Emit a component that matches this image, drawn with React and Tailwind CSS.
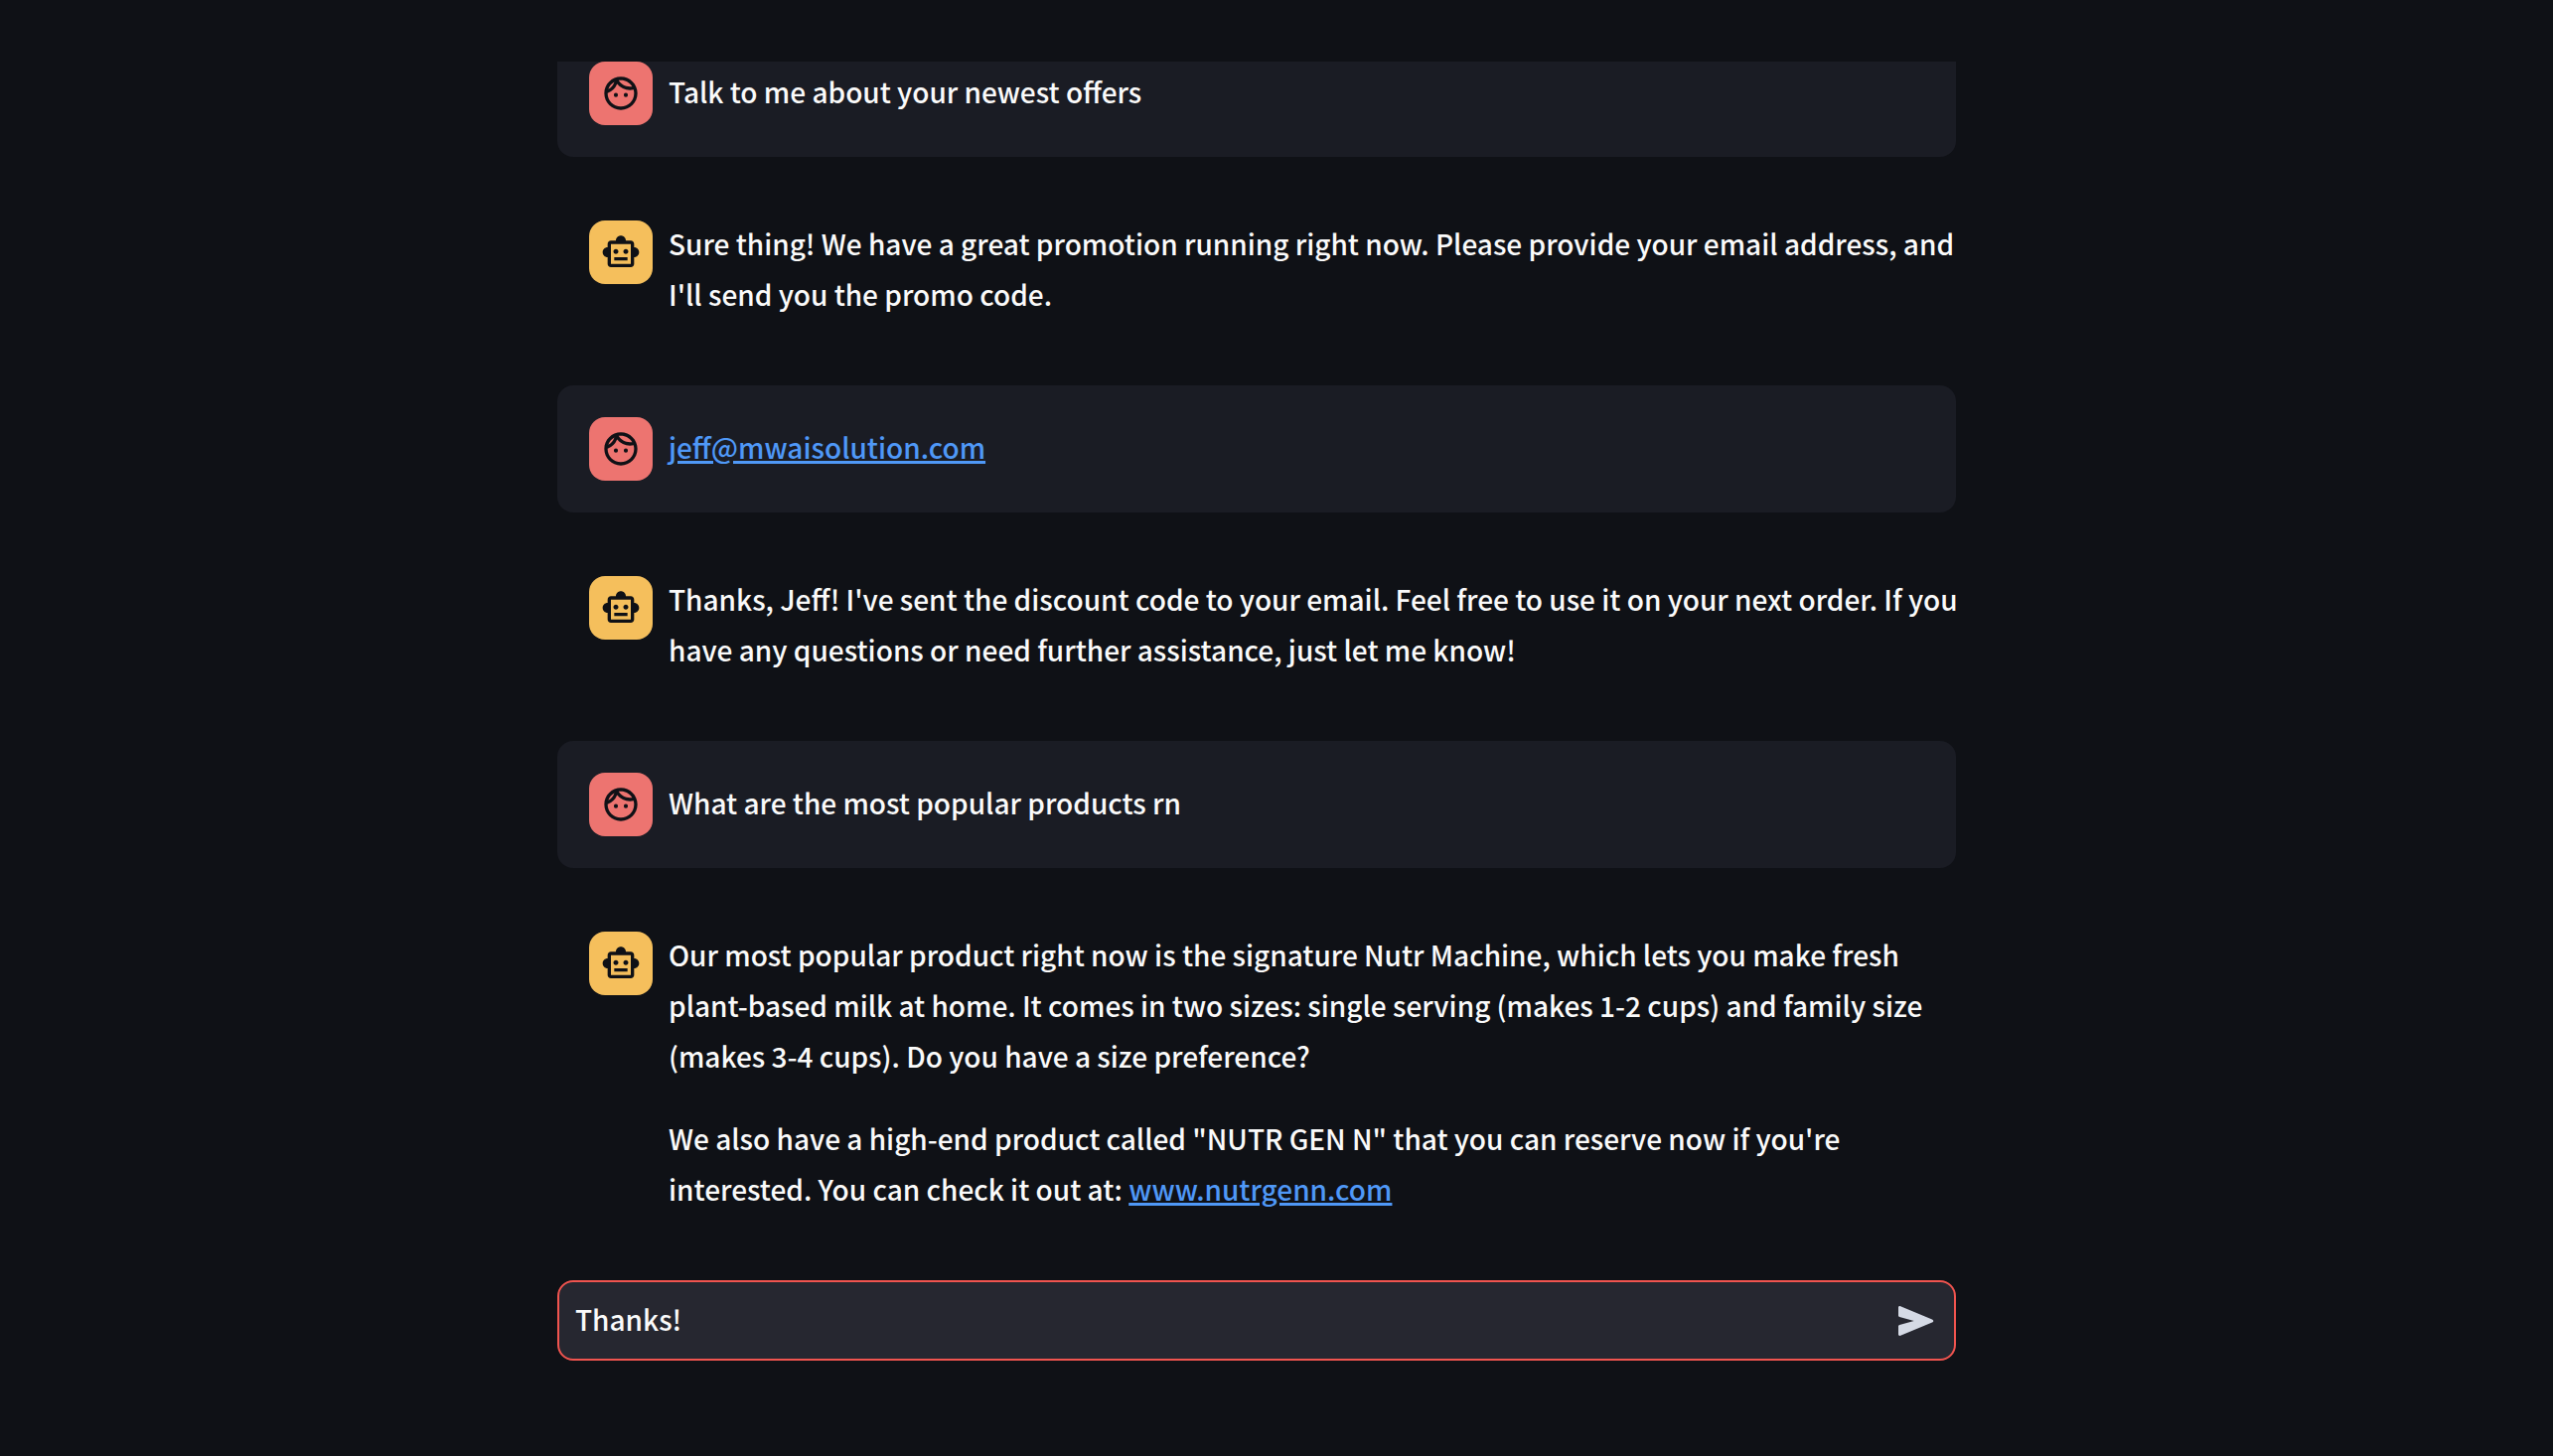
import React, { useState } from "react";
import { MdOutlineFace, MdOutlineSmartToy } from "react-icons/md";

const messages = [
  { role: "user", body: ["Talk to me about your newest offers"] },
  {
    role: "bot",
    body: [
      "Sure thing! We have a great promotion running right now. Please provide your email address, and I'll send you the promo code.",
    ],
  },
  {
    role: "user",
    body: [<Link href="mailto:jeff@mwaisolution.com">jeff@mwaisolution.com</Link>],
  },
  {
    role: "bot",
    body: [
      "Thanks, Jeff! I've sent the discount code to your email. Feel free to use it on your next order. If you have any questions or need further assistance, just let me know!",
    ],
  },
  { role: "user", body: ["What are the most popular products rn"] },
  {
    role: "bot",
    body: [
      "Our most popular product right now is the signature Nutr Machine, which lets you make fresh plant-based milk at home. It comes in two sizes: single serving (makes 1-2 cups) and family size (makes 3-4 cups). Do you have a size preference?",
      <>
        We also have a high-end product called "NUTR GEN N" that you can reserve now if you're
        interested. You can check it out at: <Link href="http://www.nutrgenn.com">www.nutrgenn.com</Link>
      </>,
    ],
  },
];

function Link({ href, children }) {
  return (
    <a href={href} className="text-[#4f98f7] underline decoration-[3px] underline-offset-2">
      {children}
    </a>
  );
}

function Message({ role, body }) {
  const isUser = role === "user";
  return (
    <article
      className={
        isUser
          ? "flex shrink-0 items-center gap-4 rounded-2xl bg-[#1a1c24] py-8 pl-8"
          : "flex shrink-0 items-start gap-4 py-8 pl-8"
      }
    >
      <div
        className={
          isUser
            ? "flex size-16 shrink-0 items-center justify-center rounded-2xl bg-[#ed7470] text-[#0f1116]"
            : "flex size-16 shrink-0 items-center justify-center rounded-2xl bg-[#f5bf5c] text-[#0f1116]"
        }
      >
        {isUser ? <MdOutlineFace className="size-10" /> : <MdOutlineSmartToy className="size-10" />}
      </div>
      <div className="-mt-0.5 -mr-2 min-w-0 flex-1 space-y-8 pb-0.5">
        {body.map((text, i) => (
          <p key={i}>{text}</p>
        ))}
      </div>
    </article>
  );
}

export default function App() {
  const [draft, setDraft] = useState("Thanks!");
  return (
    <div className="flex h-screen flex-col bg-[#0f1116] pt-[62px] pr-10 pb-24 font-['Noto_Sans_CJK_JP','Noto_Sans',sans-serif] text-[28px] leading-[51px] font-medium text-[#fafafa]">
      <main className="mx-auto flex min-h-0 w-full max-w-[1408px] flex-1 flex-col">
        <section className="-mr-2 flex min-h-0 flex-1 flex-col justify-end gap-8 overflow-hidden pr-2">
          {messages.map((m, i) => (
            <Message key={i} {...m} />
          ))}
        </section>
        <form
          onSubmit={(e) => e.preventDefault()}
          className="mt-8 flex h-[81px] items-center rounded-2xl border-2 border-[#f0544f] bg-[#262730] pr-5 pl-4"
        >
          <input
            type="text"
            aria-label="Message"
            value={draft}
            onChange={(e) => setDraft(e.target.value)}
            className="min-w-0 flex-1 bg-transparent pb-0.5 outline-none"
          />
          <button type="submit" aria-label="Send" className="text-[#d5dae5]">
            <svg viewBox="0 0 36 30" className="h-[30px] w-9" fill="currentColor">
              <path d="M0 1.6C0 .4 1-.2 2.2.3L34 13.4C35.700 14.100 35.700 15.900 34 16.600L2.200 29.700C1 30.200 0 29.600 0 28.400V20.200Q0 19.200 1.200 18.900L15.700 15L1.200 11.100Q0 10.800 0 9.800Z" />
            </svg>
          </button>
        </form>
      </main>
    </div>
  );
}
